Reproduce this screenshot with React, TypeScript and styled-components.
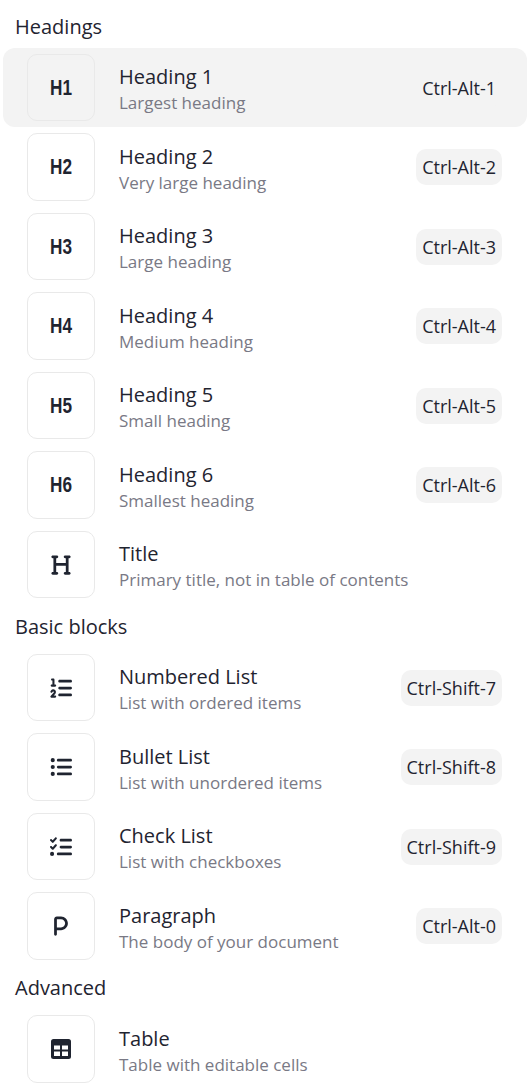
import React from "react";
import styled, { createGlobalStyle } from "styled-components";
import { FaHeading, FaListOl, FaListUl, FaListCheck, FaP } from "react-icons/fa6";

const GlobalStyle = createGlobalStyle`
  html, body {
    margin: 0;
    padding: 0;
    background: #fff;
    overflow: hidden;
    font-family: "Open Sans", "Noto Sans", sans-serif;
  }
`;

const Menu = styled.div`
  display: flex;
  flex-direction: column;
  padding: 4.4px 3px 0;
`;

const GroupLabel = styled.div`
  display: flex;
  align-items: center;
  height: 43.5px;
  padding-left: 12px;
  font-size: 20px;
  color: #1f2430;
`;

const Row = styled.div<{ $active?: boolean }>`
  display: flex;
  align-items: center;
  gap: 24px;
  height: 79.5px;
  padding: 0 24px;
  box-sizing: border-box;
  border-radius: 12px;
  background: ${(p) => (p.$active ? "#f3f3f3" : "transparent")};
`;

const IconBox = styled.div`
  display: flex;
  align-items: center;
  justify-content: center;
  flex: none;
  width: 68px;
  height: 67.5px;
  box-sizing: border-box;
  border: 1px solid #e9e9e9;
  border-radius: 10px;
  color: #1f2430;
  font-size: 22px;
`;

const HeadingMark = styled.span`
  display: inline-block;
  font-family: "Liberation Sans", sans-serif;
  font-weight: 700;
  font-size: 22px;
  line-height: 1;
  transform: scaleX(0.78);
`;

const Texts = styled.div`
  display: flex;
  flex-direction: column;
  flex: 1;
  padding-top: 4px;
`;

const Title = styled.div`
  font-size: 20px;
  line-height: 26px;
  color: #1f2430;
`;

const Subtitle = styled.div`
  font-size: 17px;
  line-height: 25px;
  color: #797985;
`;

const Shortcut = styled.div`
  flex: none;
  margin-right: 1px;
  padding: 0 6px;
  height: 36px;
  display: flex;
  align-items: center;
  border-radius: 10px;
  background: #f3f3f3;
  font-size: 18px;
  color: #1f2430;
`;

const TableIcon: React.FC = () => (
  <svg width="20" height="20" viewBox="0 0 20 20">
    <rect width="20" height="20" rx="2.5" fill="currentColor" />
    <path d="M3 6.5h6v4H3zM11 6.5h6v4h-6zM3 12.5h6v4.5H3zM11 12.5h6v4.5h-6z" fill="#fff" />
  </svg>
);

type Item = { icon: React.ReactNode; title: string; sub: string; key?: string; active?: boolean };

const headings: Item[] = [
  { icon: <HeadingMark>H1</HeadingMark>, title: "Heading 1", sub: "Largest heading", key: "Ctrl-Alt-1", active: true },
  { icon: <HeadingMark>H2</HeadingMark>, title: "Heading 2", sub: "Very large heading", key: "Ctrl-Alt-2" },
  { icon: <HeadingMark>H3</HeadingMark>, title: "Heading 3", sub: "Large heading", key: "Ctrl-Alt-3" },
  { icon: <HeadingMark>H4</HeadingMark>, title: "Heading 4", sub: "Medium heading", key: "Ctrl-Alt-4" },
  { icon: <HeadingMark>H5</HeadingMark>, title: "Heading 5", sub: "Small heading", key: "Ctrl-Alt-5" },
  { icon: <HeadingMark>H6</HeadingMark>, title: "Heading 6", sub: "Smallest heading", key: "Ctrl-Alt-6" },
  { icon: <FaHeading />, title: "Title", sub: "Primary title, not in table of contents" },
];

const basics: Item[] = [
  { icon: <FaListOl />, title: "Numbered List", sub: "List with ordered items", key: "Ctrl-Shift-7" },
  { icon: <FaListUl />, title: "Bullet List", sub: "List with unordered items", key: "Ctrl-Shift-8" },
  { icon: <FaListCheck />, title: "Check List", sub: "List with checkboxes", key: "Ctrl-Shift-9" },
  { icon: <FaP />, title: "Paragraph", sub: "The body of your document", key: "Ctrl-Alt-0" },
];

const advanced: Item[] = [{ icon: <TableIcon />, title: "Table", sub: "Table with editable cells" }];

const groups = [
  { label: "Headings", items: headings },
  { label: "Basic blocks", items: basics },
  { label: "Advanced", items: advanced },
];

const App: React.FC = () => {
  return (
    <>
      <GlobalStyle />
      <Menu>
        {groups.map((group) => (
          <React.Fragment key={group.label}>
            <GroupLabel>{group.label}</GroupLabel>
            {group.items.map((item) => (
              <Row key={item.title} $active={item.active}>
                <IconBox>{item.icon}</IconBox>
                <Texts>
                  <Title>{item.title}</Title>
                  <Subtitle>{item.sub}</Subtitle>
                </Texts>
                {item.key && <Shortcut>{item.key}</Shortcut>}
              </Row>
            ))}
          </React.Fragment>
        ))}
      </Menu>
    </>
  );
};

export default App;
